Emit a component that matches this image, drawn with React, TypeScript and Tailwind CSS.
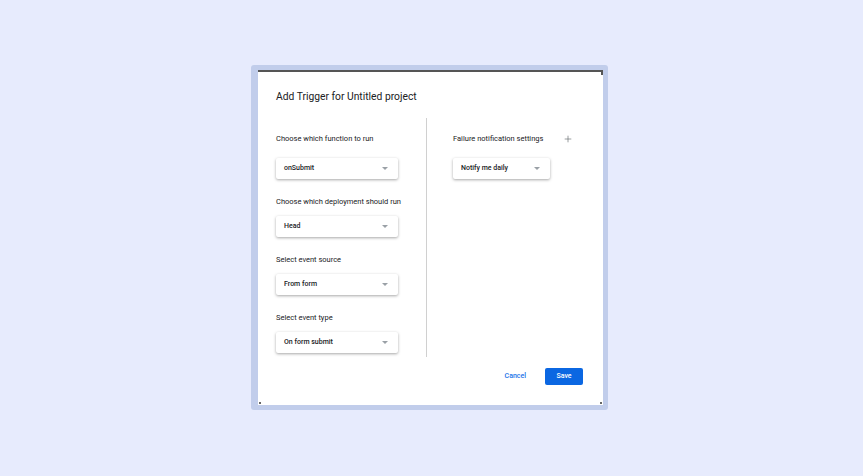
import { Plus } from "lucide-react";

function Field({ label, value, width, gap }: { label: string; value: string; width: string; gap: string }) {
  return (
    <div className="flex flex-col">
      <div className="text-[7.5px] leading-[14px] text-[#202124]">{label}</div>
      <Select value={value} width={width} gap={gap} />
    </div>
  );
}

function Select({ value, width, gap }: { value: string; width: string; gap: string }) {
  return (
    <div
      className={`${width} ${gap} flex h-[21px] items-center justify-between rounded-[2px] bg-white pl-[8px] pr-[10px] shadow-[0_1px_3px_rgba(0,0,0,0.35)]`}
    >
      <span className="text-[7px] font-medium text-[#202124]">{value}</span>
      <span className="h-0 w-0 border-x-[3px] border-t-[3px] border-x-transparent border-t-[#9aa0a6]" />
    </div>
  );
}

export default function App() {
  return (
    <main
      className="flex h-[476px] w-full items-start bg-[#e7ebfd] pl-[251px] pt-[65px]"
      style={{ fontFamily: "Roboto, 'Liberation Sans', sans-serif" }}
    >
      <div className="rounded-[3px] bg-[#c1cdeb] pb-[5px] pl-[7px] pr-[5px] pt-[5px]">
        <div className="relative flex h-[335px] w-[345px] flex-col border-t-2 border-[#555] bg-white">
          <div className="pl-[18px] pt-[15px] text-[10.3px] leading-5 text-[#202124]">
            Add Trigger for Untitled project
          </div>

          <div className="mt-[11px] flex">
            <div className="flex w-[168px] flex-col gap-[16px] pl-[18px] pt-[14px]">
              <Field label="Choose which function to run" value="onSubmit" width="w-[122px]" gap="mt-[12px]" />
              <Field label="Choose which deployment should run" value="Head" width="w-[122px]" gap="mt-[7px]" />
              <Field label="Select event source" value="From form" width="w-[122px]" gap="mt-[7px]" />
              <Field label="Select event type" value="On form submit" width="w-[122px]" gap="mt-[7px]" />
            </div>
            <div className="h-[239px] w-px bg-[#d0d0d0]" />
            <div className="flex flex-col pl-[26px] pt-[14px]">
              <div className="flex w-[120px] items-center justify-between">
                <span className="text-[7.5px] leading-[14px] text-[#202124]">Failure notification settings</span>
                <Plus className="h-[10px] w-[10px] text-[#5f6368]" strokeWidth={1.5} />
              </div>
              <Select value="Notify me daily" width="w-[97px]" gap="mt-[12px]" />
            </div>
          </div>

          <div className="mt-[11px] flex items-center justify-end gap-[19px] pr-[20px]">
            <button className="text-[7px] font-medium text-[#1a73e8]">Cancel</button>
            <button className="flex h-[17px] w-[38px] items-center justify-center rounded-[2px] bg-[#0b67e2] text-[7px] font-medium text-white">
              Save
            </button>
          </div>

          <span className="absolute right-0 top-0 h-[3px] w-[2px] bg-[#555]" />
          <span className="absolute bottom-[1px] left-[1px] h-[2px] w-[2px] bg-[#666]" />
          <span className="absolute bottom-[1px] right-[1px] h-[2px] w-[2px] bg-[#666]" />
        </div>
      </div>
    </main>
  );
}
